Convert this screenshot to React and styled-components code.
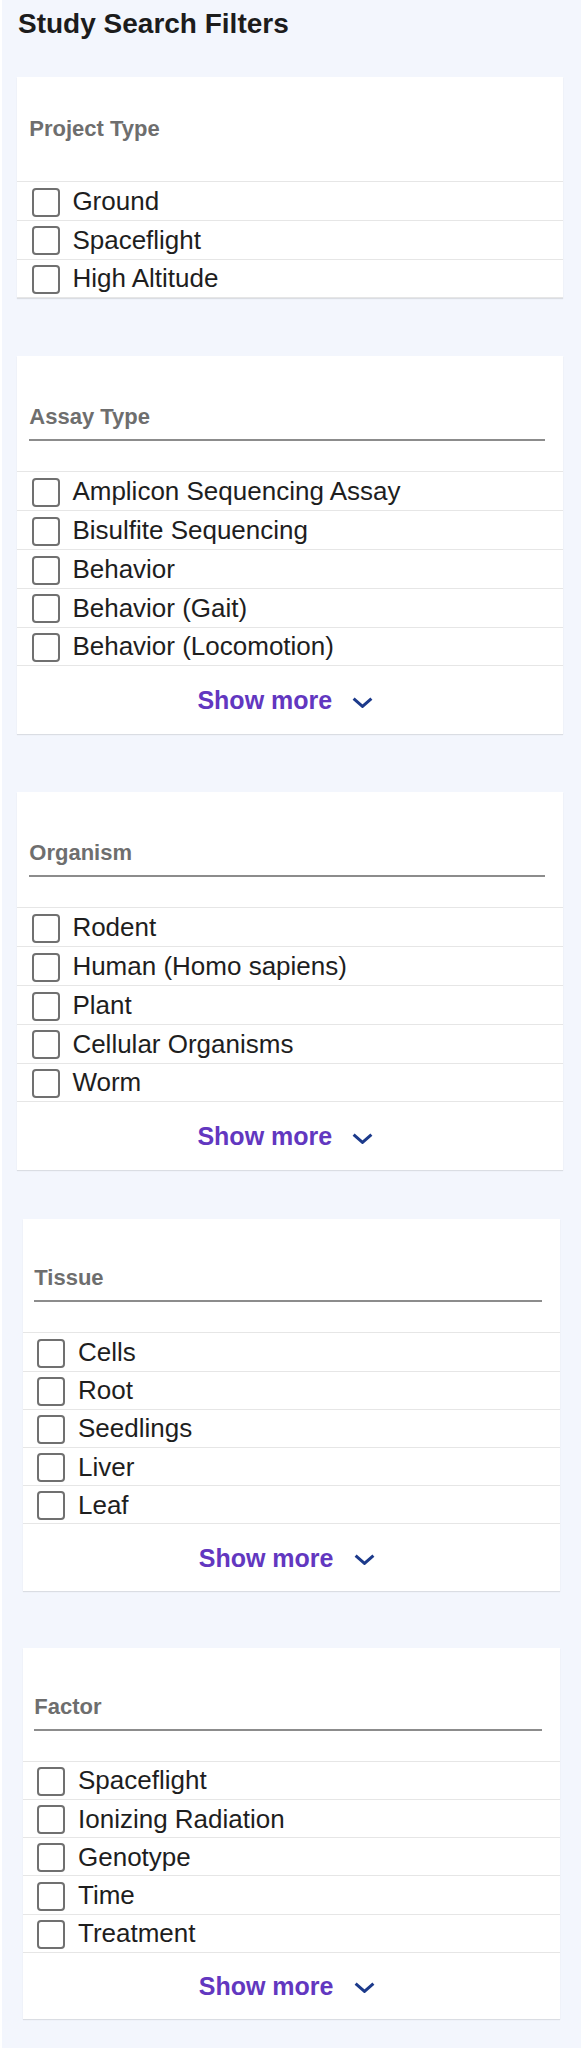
import React from 'react';
import styled, { createGlobalStyle } from 'styled-components';

const filters = [
  { title: 'Project Type', plain: true, items: ['Ground', 'Spaceflight', 'High Altitude'] },
  {
    title: 'Assay Type',
    items: ['Amplicon Sequencing Assay', 'Bisulfite Sequencing', 'Behavior', 'Behavior (Gait)', 'Behavior (Locomotion)'],
  },
  {
    title: 'Organism',
    items: ['Rodent', 'Human (Homo sapiens)', 'Plant', 'Cellular Organisms', 'Worm'],
  },
  { title: 'Tissue', narrow: true, gap: 49, items: ['Cells', 'Root', 'Seedlings', 'Liver', 'Leaf'] },
  {
    title: 'Factor',
    narrow: true,
    gap: 57,
    items: ['Spaceflight', 'Ionizing Radiation', 'Genotype', 'Time', 'Treatment'],
  },
];

const ChevronDown = () => (
  <svg width="21" height="11" viewBox="0 0 21 11" fill="none">
    <polyline points="1.6,1.6 10.5,9.4 19.4,1.6" stroke="#1c3a8b" strokeWidth="3" />
  </svg>
);

const FilterCard = ({ title, items, plain, narrow, gap }) => {
  return (
    <Card $narrow={narrow} $gap={gap}>
      {plain ? (
        <PlainHeader>{title}</PlainHeader>
      ) : (
        <HeaderWrap $narrow={narrow}>
          <Heading>{title}</Heading>
        </HeaderWrap>
      )}
      <List>
        {items.map((item) => (
          <Row key={item} $narrow={narrow}>
            <Box />
            <Label>{item}</Label>
          </Row>
        ))}
      </List>
      {!plain && (
        <ShowMore type="button" $narrow={narrow}>
          <span>Show more</span>
          <Icon>
            <ChevronDown />
          </Icon>
        </ShowMore>
      )}
    </Card>
  );
};

const App = () => {
  return (
    <>
      <GlobalStyle />
      <Panel>
        <Title>Study Search Filters</Title>
        {filters.map((f) => (
          <FilterCard key={f.title} {...f} />
        ))}
      </Panel>
    </>
  );
};

const GlobalStyle = createGlobalStyle`
  html, body {
    margin: 0;
    padding: 0;
    background: #fff;
  }
  body {
    font-family: "Liberation Sans", Arial, sans-serif;
  }
`;

const Panel = styled.aside`
  box-sizing: border-box;
  min-height: 2048px;
  margin: 0 2px;
  padding-top: 8px;
  background: #f3f6fd;
`;

const Title = styled.h1`
  margin: 0 0 0 16px;
  font-size: 28px;
  line-height: 32px;
  font-weight: bold;
  color: #1c1c1c;
`;

const Card = styled.section`
  margin: ${(p) => (p.$gap ? `${p.$gap}px` : '58px')} ${(p) => (p.$narrow ? '21px' : '17.7px')} 0
    ${(p) => (p.$narrow ? '21.3px' : '15.3px')};
  background: #fff;
  box-shadow: 0 1px 1px rgba(0, 0, 0, 0.1);

  &:first-of-type {
    margin-top: 37px;
  }
`;

const PlainHeader = styled.h3`
  margin: 0;
  padding: 39px 12px;
  font-size: 22px;
  line-height: 26px;
  font-weight: bold;
  color: #6e6e6e;
`;

const HeaderWrap = styled.div`
  padding: ${(p) => (p.$narrow ? '46px 18px 30px 11px' : '48px 18px 30px 12px')};
`;

const Heading = styled.h3`
  margin: 0;
  padding-bottom: 9px;
  border-bottom: 2px solid #8c8c8c;
  font-size: 22px;
  line-height: 26px;
  font-weight: bold;
  color: #6e6e6e;
`;

const List = styled.div`
  border-bottom: 1px solid #e6e6e6;
`;

const Row = styled.label`
  box-sizing: border-box;
  display: flex;
  align-items: center;
  gap: 12.7px;
  height: ${(p) => (p.$narrow ? '38.2px' : '38.8px')};
  padding-left: ${(p) => (p.$narrow ? '14px' : '14.4px')};
  border-top: 1px solid #e6e6e6;
`;

const Box = styled.span`
  box-sizing: border-box;
  flex: none;
  width: 28px;
  height: 29px;
  margin-top: 2.4px;
  border: 2.5px solid #707070;
  border-radius: 4px;
  background: #fff;
`;

const Label = styled.span`
  font-size: 26px;
  line-height: 30px;
  color: #1e1e1e;
`;

const ShowMore = styled.button`
  display: flex;
  justify-content: center;
  align-items: center;
  width: 100%;
  height: ${(p) => (p.$narrow ? '66.5px' : '68px')};
  padding: 0;
  border: none;
  background: none;
  font-family: "Liberation Sans", Arial, sans-serif;
  font-size: 25px;
  line-height: 30px;
  font-weight: bold;
  color: #6237c0;
  cursor: pointer;
`;

const Icon = styled.span`
  display: flex;
  width: 31px;
  margin: 4px 0 0 20px;
`;

export default App;
